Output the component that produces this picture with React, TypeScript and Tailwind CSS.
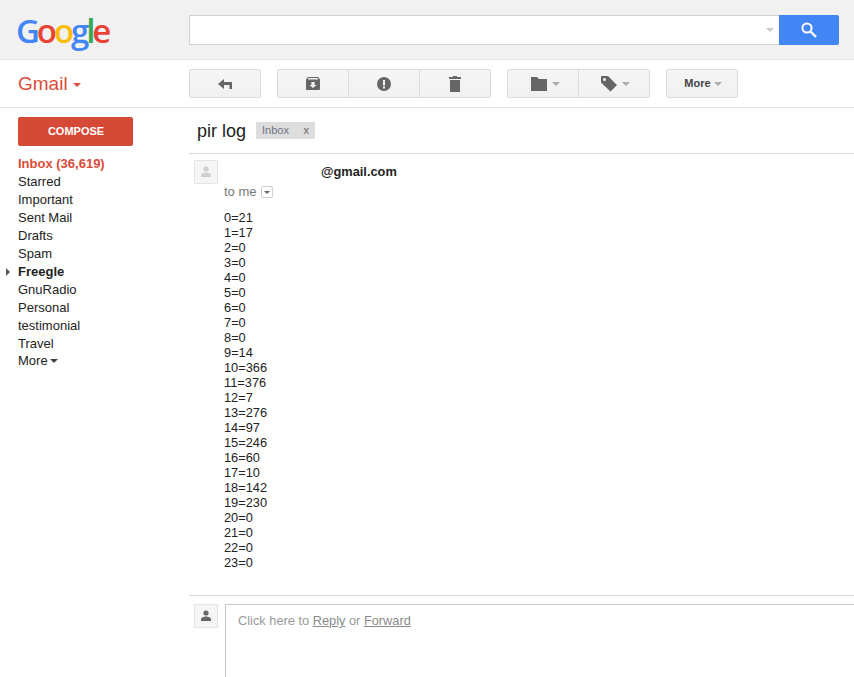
const labels = [
  { name: 'Starred' },
  { name: 'Important' },
  { name: 'Sent Mail' },
  { name: 'Drafts' },
  { name: 'Spam' },
  { name: 'Freegle', bold: true },
  { name: 'GnuRadio' },
  { name: 'Personal' },
  { name: 'testimonial' },
  { name: 'Travel' },
];

const counts = [21, 17, 0, 0, 0, 0, 0, 0, 0, 14, 366, 376, 7, 276, 97, 246, 60, 10, 142, 230, 0, 0, 0, 0];

function Caret({ className }: { className: string }) {
  return <span className={`inline-block w-0 h-0 border-x-[4px] border-x-transparent border-t-[4px] ${className}`} />;
}

function PersonIcon({ className }: { className: string }) {
  return (
    <svg viewBox="0 0 14 14" className={`w-[14px] h-[14px] ${className}`} fill="currentColor">
      <circle cx="7" cy="4" r="2.6" />
      <path d="M2 12v-1.6C2 8.6 4.8 7.6 7 7.6s5 1 5 2.8V12z" />
    </svg>
  );
}

function ToolButton({ children, divider, className = '' }: { children: React.ReactNode; divider?: boolean; className?: string }) {
  return (
    <div className={`h-full flex items-center justify-center gap-[5px] ${divider ? 'border-l border-[#dcdcdc]' : ''} ${className}`}>
      {children}
    </div>
  );
}

const groupClass = 'h-[29px] flex rounded-[2px] border border-[#dcdcdc] bg-gradient-to-b from-[#f5f5f5] to-[#f1f1f1]';

export default function App() {
  return (
    <div className="w-[854px] h-[677px] overflow-hidden bg-white text-[13px] leading-[15px] text-[#222] font-['Liberation_Sans',Arial,sans-serif]">
      {/* Top bar */}
      <div className="h-[60px] bg-[#f1f1f1] border-b border-[#e5e5e5] flex items-start">
        <div className="w-[189px] pl-[16px] pt-[9px] text-[33px] leading-[44px] tracking-[-3.1px] font-semibold font-['Open_Sans',sans-serif]">
          <span className="text-[#4285f4]">G</span>
          <span className="text-[#ea4335]">o</span>
          <span className="text-[#fbbc05]">o</span>
          <span className="text-[#4285f4]">g</span>
          <span className="text-[#34a853]">l</span>
          <span className="text-[#ea4335]">e</span>
        </div>
        <div className="mt-[15px] w-[590px] h-[30px] bg-white border border-[#cfcfcf] border-r-0 flex items-center justify-end pr-[5px]">
          <Caret className="border-t-[#c9c9c9]" />
        </div>
        <div className="mt-[15px] w-[60px] h-[30px] bg-[#4285f4] rounded-r-[2px] flex items-center justify-center">
          <svg viewBox="0 0 16 16" className="w-[16px] h-[16px] text-white" fill="none" stroke="currentColor">
            <circle cx="6" cy="6" r="4.6" strokeWidth="2" />
            <path d="M9.500 9.500 15 15" strokeWidth="2.400" />
          </svg>
        </div>
      </div>

      {/* Toolbar */}
      <div className="h-[48px] border-b border-[#e5e5e5] flex items-start">
        <div className="w-[189px] pl-[18px] pt-[13px] flex items-center gap-[5px] text-[#dd4b39] text-[19px] leading-[22px]">
          Gmail
          <Caret className="border-t-[#dd4b39] mt-[1px]" />
        </div>
        <div className="pt-[9px] flex">
          <div className={`${groupClass} w-[72px]`}>
            <ToolButton className="w-full">
              <svg viewBox="0 0 14 10" className="w-[14px] h-[10px] text-[#666]" fill="currentColor">
                <path d="M0 5 6 0v3h8v7h-2.500V6H6v4z" />
              </svg>
            </ToolButton>
          </div>
          <div className={`${groupClass} w-[214px] ml-[16px]`}>
            <ToolButton className="w-[70px]">
              <svg viewBox="0 0 14 13" className="w-[14px] h-[13px] text-[#666]" fill="currentColor">
                <path d="M2 0h10l2 2.500V12a1 1 0 0 1-1 1H1a1 1 0 0 1-1-1V2.500zM1.800 2.400h10.400L11.400 1H2.600zM5.400 5v3H3.500L7 11l3.500-3H8.600V5z" fillRule="evenodd" />
              </svg>
            </ToolButton>
            <ToolButton divider className="w-[71px]">
              <svg viewBox="0 0 14 14" className="w-[14px] h-[14px] text-[#666]" fill="currentColor">
                <path d="M7 0a7 7 0 1 1 0 14A7 7 0 0 1 7 0zM6 3v5.500h2V3zm0 6.500V11.500h2V9.500z" fillRule="evenodd" />
              </svg>
            </ToolButton>
            <ToolButton divider className="flex-1">
              <svg viewBox="0 0 12 16" className="w-[12px] h-[16px] text-[#666]" fill="currentColor">
                <path d="M4 0h4v1h4v2H0V1h4zM1 4h10v12H1z" />
              </svg>
            </ToolButton>
          </div>
          <div className={`${groupClass} w-[143px] ml-[16px]`}>
            <ToolButton className="w-[70px] pl-[5px]">
              <svg viewBox="0 0 16 14" className="w-[16px] h-[14px] text-[#666]" fill="currentColor">
                <path d="M0 0h6l2 2h8v12H0z" />
              </svg>
              <Caret className="border-t-[#aaa]" />
            </ToolButton>
            <ToolButton divider className="flex-1 pl-[3px]">
              <svg viewBox="0 0 16 16" className="w-[16px] h-[16px] text-[#666]" fill="currentColor">
                <path d="M1 0h6l9 9-6.500 6.500L0 6.500V1a1 1 0 0 1 1-1zm2.500 2A1.500 1.500 0 1 0 3.500 5a1.500 1.500 0 0 0 0-3z" fillRule="evenodd" />
              </svg>
              <Caret className="border-t-[#aaa]" />
            </ToolButton>
          </div>
          <div className={`${groupClass} w-[72px] ml-[16px]`}>
            <ToolButton className="w-full pl-[2px] !gap-[3px] text-[11px] font-bold text-[#444]">
              More
              <Caret className="border-t-[#aaa]" />
            </ToolButton>
          </div>
        </div>
      </div>

      <div className="flex">
        {/* Sidebar */}
        <div className="w-[189px] shrink-0 pt-[9px]">
          <div className="ml-[18px] w-[115px] h-[29px] pl-[1px] rounded-[2px] bg-[#d64937] border border-[#d14836] flex items-center justify-center text-white text-[11px] font-bold">
            COMPOSE
          </div>
          <div className="mt-[9px] pl-[18px]">
            <div className="h-[18px] leading-[18px] font-bold text-[#dd4b39]">Inbox (36,619)</div>
            {labels.map((l) => (
              <div key={l.name} className={`relative h-[18px] leading-[18px] ${l.bold ? 'font-bold' : ''}`}>
                {l.bold && (
                  <span className="absolute left-[-12px] top-[5px] w-0 h-0 border-y-[4px] border-y-transparent border-l-[4px] border-l-[#555]" />
                )}
                {l.name}
              </div>
            ))}
            <div className="h-[16px] leading-[16px] flex items-center gap-[2px]">
              More
              <Caret className="border-t-[#444]" />
            </div>
          </div>
        </div>

        {/* Message */}
        <div className="flex-1 min-w-0">
          <div className="h-[46px] border-b border-[#d8d8d8] pl-[8px] flex items-center gap-[10px]">
            <span className="text-[18px] leading-[22px]">pir log</span>
            <span className="w-[59px] h-[17px] bg-[#dddddd] flex items-center justify-between pl-[6px] pr-[6px] text-[11px] leading-[13px]">
              <span className="text-[#6f7580]">Inbox</span>
              <span className="text-[#666]">x</span>
            </span>
          </div>
          <div className="flex pl-[5px] pt-[6px] h-[442px] border-b border-[#d8d8d8]">
            <div className="w-[24px] h-[24px] bg-[#f5f5f5] border border-[#e5e5e5] flex items-center justify-center">
              <PersonIcon className="text-[#cfcfcf]" />
            </div>
            <div className="ml-[6px] text-[12.8px]">
              <div className="pl-[97px] pt-[4px] font-bold">@gmail.com</div>
              <div className="mt-[5px] flex items-center gap-[4px] text-[#777] text-[13px]">
                to me
                <span className="w-[12px] h-[12px] mt-[1px] border border-[#cfcfcf] rounded-[2px] flex items-center justify-center">
                  <Caret className="border-t-[#666] !border-x-[3px] !border-t-[3px]" />
                </span>
              </div>
              <div className="mt-[11px]">
                {counts.map((c, i) => (
                  <div key={i}>{i}={c}</div>
                ))}
              </div>
            </div>
          </div>
          <div className="flex pl-[5px] pt-[8px]">
            <div className="w-[24px] h-[24px] bg-[#f5f5f5] border border-[#e5e5e5] flex items-center justify-center">
              <PersonIcon className="text-[#666]" />
            </div>
            <div className="ml-[7px] flex-1 h-[90px] border border-[#c8c8c8] border-r-0 pl-[12px] pt-[8px] text-[12.8px] text-[#999]">
              Click here to <span className="underline text-[#8a8a8a]">Reply</span> or <span className="underline text-[#8a8a8a]">Forward</span>
            </div>
          </div>
        </div>
      </div>
    </div>
  );
}
